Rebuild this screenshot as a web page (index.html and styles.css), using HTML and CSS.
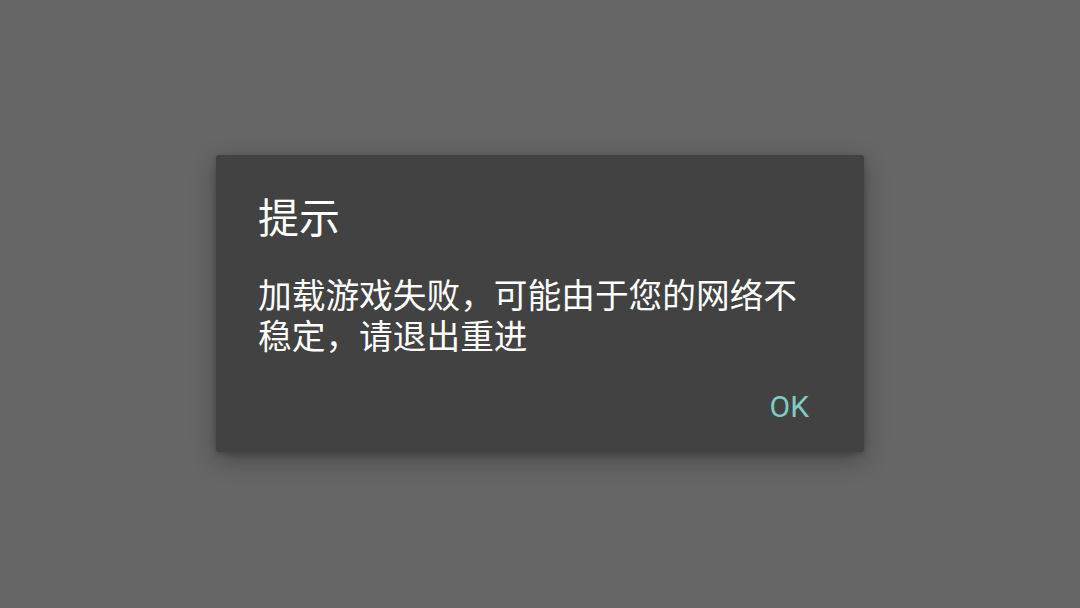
FILE: index.html
```html
<!DOCTYPE html>
<html lang="zh">
<head>
<meta charset="utf-8">
<link rel="stylesheet" href="styles.css">
</head>
<body>
<div class="screen">
  <div class="dialog">
    <div class="title">提示</div>
    <div class="message">加载游戏失败，可能由于您的网络不稳定，请退出重进</div>
    <div class="actions"><span class="ok">OK</span></div>
  </div>
</div>
</body>
</html>
```
FILE: styles.css
```css
html, body {
  margin: 0;
  padding: 0;
}
body {
  width: 1080px;
  height: 608px;
  background: #666666;
  font-family: Roboto, "Noto Sans CJK SC", sans-serif;
  overflow: hidden;
}
.screen {
  width: 1080px;
  height: 608px;
  display: flex;
  justify-content: center;
  padding-top: 155px;
  box-sizing: border-box;
}
.dialog {
  width: 648px;
  height: 297px;
  box-sizing: border-box;
  background: #424242;
  border-radius: 3px;
  box-shadow: 0 8px 24px rgba(0, 0, 0, 0.3), 0 2px 6px rgba(0, 0, 0, 0.2);
  padding: 36px 42px 0 42px;
  display: flex;
  flex-direction: column;
}
.title {
  font-family: "Noto Sans CJK SC", sans-serif;
  font-size: 41px;
  line-height: 48px;
  color: #ffffff;
}
.message {
  margin-top: 34px;
  font-family: "Noto Sans CJK SC", sans-serif;
  font-size: 33.7px;
  line-height: 41px;
  color: #ffffff;
}
.actions {
  margin-top: 32px;
  display: flex;
  justify-content: flex-end;
  padding-right: 13px;
}
.ok {
  font-family: Roboto, sans-serif;
  font-size: 30px;
  line-height: 40px;
  color: #80cbc4;
}
```
